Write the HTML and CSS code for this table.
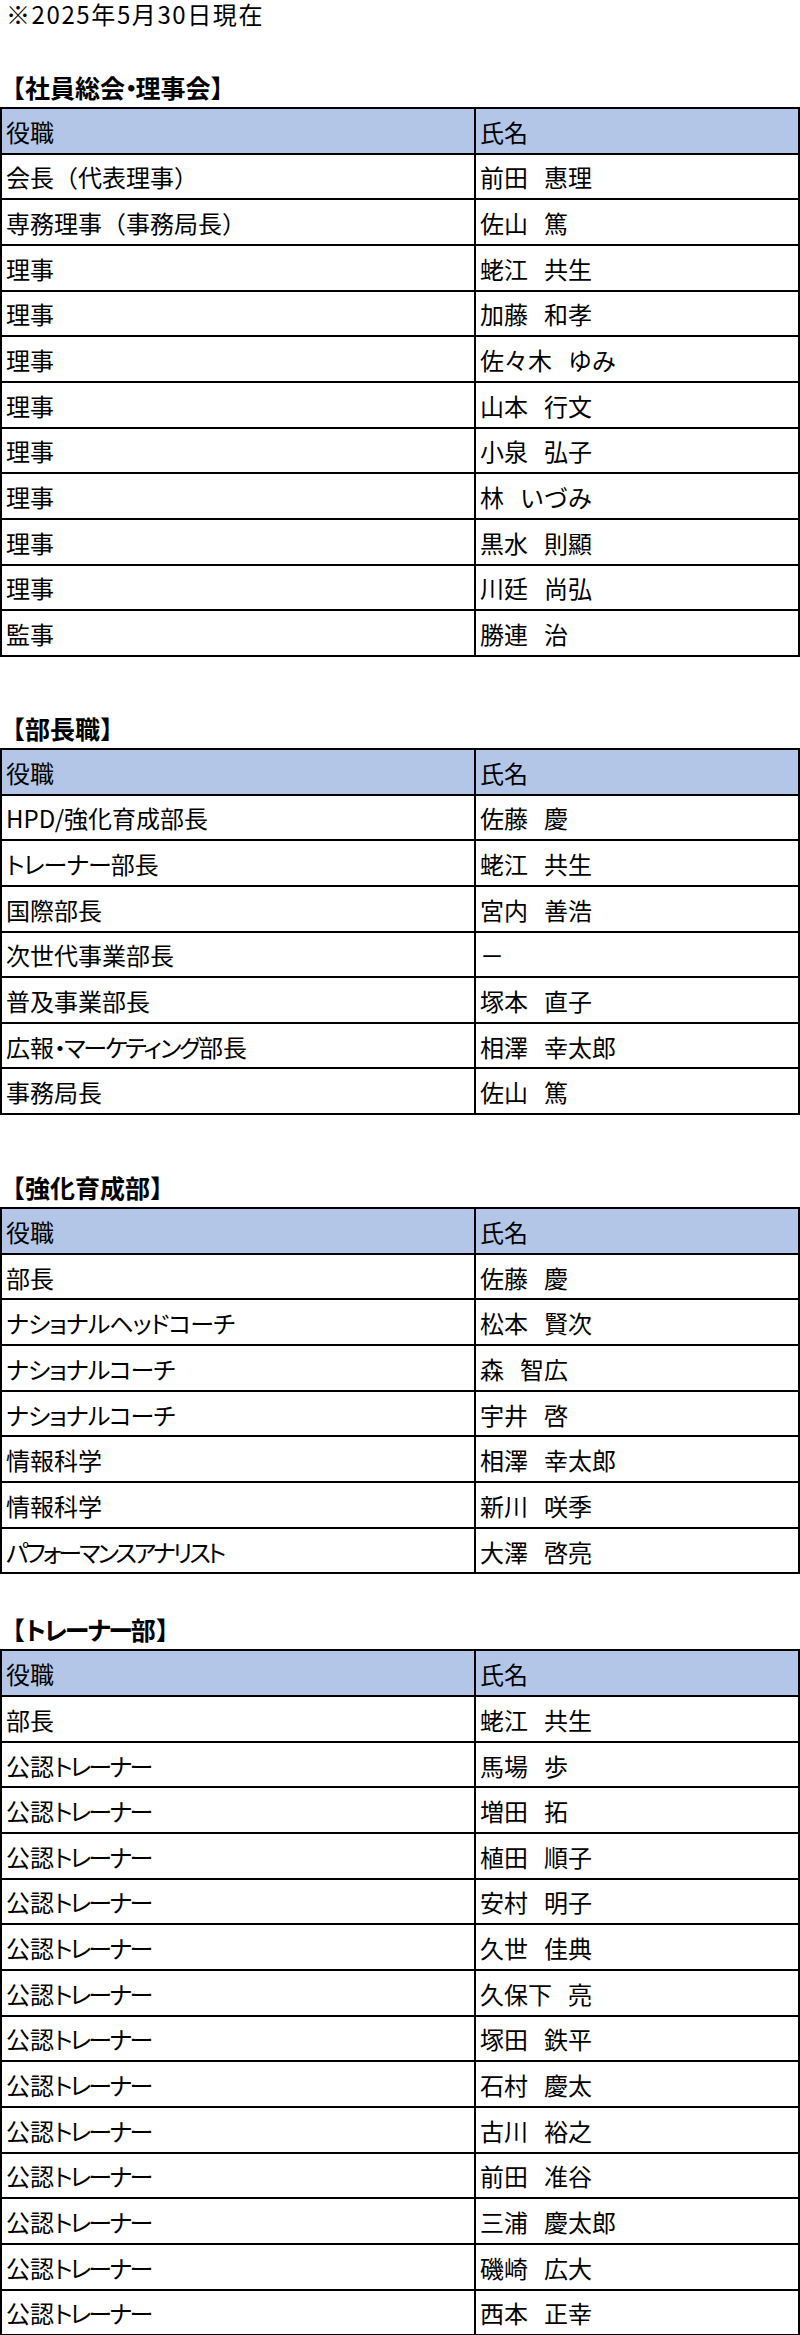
FILE: index.html
```html
<!DOCTYPE html>
<html lang="ja">
<head>
<meta charset="utf-8">
<title>役員一覧</title>
<link rel="stylesheet" href="styles.css">
</head>
<body>
<div class="date">※2025年5月30日現在</div>

<section class="sec sec-1">
  <h2 class="sec-title">【社員総会<span class="k">・</span>理事会】</h2>
  <div class="tbl">
    <div class="row head"><div class="c1">役職</div><div class="c2">氏名</div></div>
    <div class="row"><div class="c1">会長（代表理事）</div><div class="c2">前田<span class="sp">　</span>惠理</div></div>
    <div class="row"><div class="c1">専務理事（事務局長）</div><div class="c2">佐山<span class="sp">　</span>篤</div></div>
    <div class="row"><div class="c1">理事</div><div class="c2">蛯江<span class="sp">　</span>共生</div></div>
    <div class="row"><div class="c1">理事</div><div class="c2">加藤<span class="sp">　</span>和孝</div></div>
    <div class="row"><div class="c1">理事</div><div class="c2">佐々木<span class="sp">　</span>ゆみ</div></div>
    <div class="row"><div class="c1">理事</div><div class="c2">山本<span class="sp">　</span>行文</div></div>
    <div class="row"><div class="c1">理事</div><div class="c2">小泉<span class="sp">　</span>弘子</div></div>
    <div class="row"><div class="c1">理事</div><div class="c2">林<span class="sp">　</span>いづみ</div></div>
    <div class="row"><div class="c1">理事</div><div class="c2">黒水<span class="sp">　</span>則顯</div></div>
    <div class="row"><div class="c1">理事</div><div class="c2">川廷<span class="sp">　</span>尚弘</div></div>
    <div class="row"><div class="c1">監事</div><div class="c2">勝連<span class="sp">　</span>治</div></div>
  </div>
</section>

<section class="sec sec-2">
  <h2 class="sec-title">【部長職】</h2>
  <div class="tbl">
    <div class="row head"><div class="c1">役職</div><div class="c2">氏名</div></div>
    <div class="row"><div class="c1">HPD/強化育成部長</div><div class="c2">佐藤<span class="sp">　</span>慶</div></div>
    <div class="row"><div class="c1"><span class="k k1">トレーナー</span>部長</div><div class="c2">蛯江<span class="sp">　</span>共生</div></div>
    <div class="row"><div class="c1">国際部長</div><div class="c2">宮内<span class="sp">　</span>善浩</div></div>
    <div class="row"><div class="c1">次世代事業部長</div><div class="c2">－</div></div>
    <div class="row"><div class="c1">普及事業部長</div><div class="c2">塚本<span class="sp">　</span>直子</div></div>
    <div class="row"><div class="c1">広報<span class="k">・マーケティング</span>部長</div><div class="c2">相澤<span class="sp">　</span>幸太郎</div></div>
    <div class="row"><div class="c1">事務局長</div><div class="c2">佐山<span class="sp">　</span>篤</div></div>
  </div>
</section>

<section class="sec sec-3">
  <h2 class="sec-title">【強化育成部】</h2>
  <div class="tbl">
    <div class="row head"><div class="c1">役職</div><div class="c2">氏名</div></div>
    <div class="row"><div class="c1">部長</div><div class="c2">佐藤<span class="sp">　</span>慶</div></div>
    <div class="row"><div class="c1"><span class="k k1">ナショナルヘッドコーチ</span></div><div class="c2">松本<span class="sp">　</span>賢次</div></div>
    <div class="row"><div class="c1"><span class="k k1">ナショナルコーチ</span></div><div class="c2">森<span class="sp">　</span>智広</div></div>
    <div class="row"><div class="c1"><span class="k k1">ナショナルコーチ</span></div><div class="c2">宇井<span class="sp">　</span>啓</div></div>
    <div class="row"><div class="c1">情報科学</div><div class="c2">相澤<span class="sp">　</span>幸太郎</div></div>
    <div class="row"><div class="c1">情報科学</div><div class="c2">新川<span class="sp">　</span>咲季</div></div>
    <div class="row"><div class="c1"><span class="k k3">パフォーマンスアナリスト</span></div><div class="c2">大澤<span class="sp">　</span>啓亮</div></div>
  </div>
</section>

<section class="sec sec-4">
  <h2 class="sec-title">【<span class="k">トレーナー</span>部】</h2>
  <div class="tbl">
    <div class="row head"><div class="c1">役職</div><div class="c2">氏名</div></div>
    <div class="row"><div class="c1">部長</div><div class="c2">蛯江<span class="sp">　</span>共生</div></div>
    <div class="row"><div class="c1">公認<span class="k k2">トレーナー</span></div><div class="c2">馬場<span class="sp">　</span>歩</div></div>
    <div class="row"><div class="c1">公認<span class="k k2">トレーナー</span></div><div class="c2">増田<span class="sp">　</span>拓</div></div>
    <div class="row"><div class="c1">公認<span class="k k2">トレーナー</span></div><div class="c2">植田<span class="sp">　</span>順子</div></div>
    <div class="row"><div class="c1">公認<span class="k k2">トレーナー</span></div><div class="c2">安村<span class="sp">　</span>明子</div></div>
    <div class="row"><div class="c1">公認<span class="k k2">トレーナー</span></div><div class="c2">久世<span class="sp">　</span>佳典</div></div>
    <div class="row"><div class="c1">公認<span class="k k2">トレーナー</span></div><div class="c2">久保下<span class="sp">　</span>亮</div></div>
    <div class="row"><div class="c1">公認<span class="k k2">トレーナー</span></div><div class="c2">塚田<span class="sp">　</span>鉄平</div></div>
    <div class="row"><div class="c1">公認<span class="k k2">トレーナー</span></div><div class="c2">石村<span class="sp">　</span>慶太</div></div>
    <div class="row"><div class="c1">公認<span class="k k2">トレーナー</span></div><div class="c2">古川<span class="sp">　</span>裕之</div></div>
    <div class="row"><div class="c1">公認<span class="k k2">トレーナー</span></div><div class="c2">前田<span class="sp">　</span>准谷</div></div>
    <div class="row"><div class="c1">公認<span class="k k2">トレーナー</span></div><div class="c2">三浦<span class="sp">　</span>慶太郎</div></div>
    <div class="row"><div class="c1">公認<span class="k k2">トレーナー</span></div><div class="c2">磯崎<span class="sp">　</span>広大</div></div>
    <div class="row"><div class="c1">公認<span class="k k2">トレーナー</span></div><div class="c2">西本<span class="sp">　</span>正幸</div></div>
  </div>
</section>
</body>
</html>
```

FILE: styles.css
```css
html, body {
  margin: 0;
  padding: 0;
  background: #ffffff;
}

body {
  width: 800px;
  font-family: "Noto Sans CJK JP", "Noto Sans", sans-serif;
  color: #000000;
}

.date {
  height: 28px;
  line-height: 28px;
  font-size: 24px;
  letter-spacing: 1.6px;
  padding-left: 6px;
}

.sec-title {
  margin: 0;
  height: 40px;
  line-height: 40px;
  font-size: 25px;
  font-weight: 700;
  padding-left: 0;
}

.sec-1 { margin-top: 39px; }
.sec-2 { margin-top: 51px; }
.sec-3 { margin-top: 52px; }
.sec-4 { margin-top: 35px; }

.tbl {
  border-top: 2px solid #000;
  border-left: 2px solid #000;
  border-right: 2px solid #000;
}

.row {
  display: grid;
  grid-template-columns: 474px 1fr;
  height: 45.67px;
  box-sizing: border-box;
  border-bottom: 2px solid #000;
  font-size: 24px;
}

.row.head {
  background: #b4c6e7;
}

.c1, .c2 {
  display: flex;
  align-items: center;
  padding-left: 4px;
  padding-top: 2px;
  white-space: nowrap;
  line-height: 1;
}

.c1 {
  border-right: 2px solid #000;
}

/* condensed kana runs (Meiryo UI style) */
.k {
  font-feature-settings: "palt";
  letter-spacing: -2px;
}

.k1 {
  letter-spacing: -1px;
}

.k2 {
  letter-spacing: -2.6px;
}

.k3 {
  letter-spacing: -3px;
}

/* narrower gap between family and given name */
.sp {
  letter-spacing: -8px;
}
```
